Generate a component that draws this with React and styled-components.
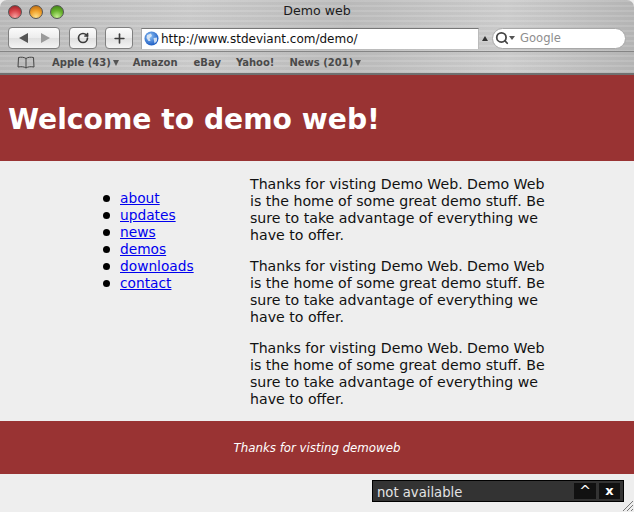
import React from "react";
import styled, { createGlobalStyle } from "styled-components";
import { RotateCw, Plus, Search } from "lucide-react";

const Global = createGlobalStyle`
  html, body { margin: 0; padding: 0; background: #eee; }
  body { font-family: "DejaVu Sans", Verdana, sans-serif; }
`;

const Page = styled.div`
  width: 634px;
  height: 512px;
  position: relative;
  overflow: hidden;
  display: flex;
  flex-direction: column;
  background: #eee;
`;

const metal = `repeating-linear-gradient(180deg, rgba(255,255,255,.07) 0 2px, rgba(0,0,0,.025) 2px 5px)`;

const Chrome = styled.div`
  height: 75px;
  flex: none;
  background: ${metal}, linear-gradient(90deg, #bcbcbc, #cdcdcd 30%, #bdbdbd 55%, #cfcfcf 80%, #b8b8b8);
  border-radius: 7px 7px 0 0;
  display: flex;
  flex-direction: column;
`;

const TitleBar = styled.div`
  height: 24px;
  flex: none;
  display: flex;
  align-items: center;
  padding: 0 8px;
  position: relative;
`;

const Lights = styled.div`
  display: flex;
  gap: 7px;
`;

const Light = styled.span`
  width: 14px;
  height: 14px;
  border-radius: 50%;
  border: 1px solid #555;
  box-sizing: border-box;
  background: radial-gradient(circle at 50% 90%, ${(p) => p.$hi} 0, ${(p) => p.$c} 50%, ${(p) => p.$dark} 100%);
`;

const Title = styled.div`
  position: absolute;
  left: 0;
  right: 0;
  top: 2px;
  text-align: center;
  font: 12.6px/18px "DejaVu Sans", sans-serif;
  color: #1c1c1c;
`;

const ToolRow = styled.div`
  height: 28px;
  flex: none;
  display: flex;
  align-items: center;
  padding: 0 8px;
  box-sizing: border-box;
`;

const Btn = styled.div`
  height: 22px;
  width: ${(p) => p.$w}px;
  margin-right: ${(p) => p.$mr}px;
  box-sizing: border-box;
  border: 1px solid #808080;
  border-radius: 4px;
  background: linear-gradient(180deg, #fbfbfb, #ececec 50%, #e0e0e0 52%, #f4f4f4);
  display: flex;
  align-items: center;
  justify-content: center;
  color: #3c3c3c;
`;

const BackForward = styled(Btn)`
  justify-content: space-around;
  padding: 0 3px;
  background: linear-gradient(90deg, transparent 49%, #c8c8c8 49%, #c8c8c8 51%, transparent 51%),
    linear-gradient(180deg, #fbfbfb, #ececec 50%, #e0e0e0 52%, #f4f4f4);
`;

const Arrow = styled.span`
  width: 0;
  height: 0;
  border-top: 5px solid transparent;
  border-bottom: 5px solid transparent;
  border-right: ${(p) => (p.$right ? "0" : "9px solid #555")};
  border-left: ${(p) => (p.$right ? "9px solid #9a9a9a" : "0")};
`;

const Address = styled.div`
  width: 338px;
  height: 21px;
  box-sizing: border-box;
  background: #fff;
  border-top: 1px solid #777;
  border-left: 1px solid #aaa;
  border-right: 1px solid #bbb;
  display: flex;
  align-items: center;
  padding-left: 2px;
  gap: 2px;
  font: 12px/18px "DejaVu Sans", sans-serif;
  color: #111;
`;

const Stepper = styled.div`
  width: 12px;
  display: flex;
  justify-content: center;
`;

const SearchField = styled.div`
  width: 134px;
  height: 21px;
  margin-left: 1px;
  box-sizing: border-box;
  border-radius: 11px;
  background: #fff;
  border: 1px solid #a8a8a8;
  display: flex;
  align-items: center;
  padding-left: 2px;
  font: 11.6px/16px "DejaVu Sans", sans-serif;
  color: #8e8e8e;
`;

const SearchCaret = styled.span`
  width: 0;
  height: 0;
  margin: 0 5px 0 0;
  border-left: 3px solid transparent;
  border-right: 3px solid transparent;
  border-top: 4px solid #555;
`;

const Bookmarks = styled.div`
  flex: 1;
  display: flex;
  align-items: center;
  border-top: 1px solid #858585;
  border-bottom: 2px solid #707070;
  padding-left: 17px;
  box-sizing: border-box;
  margin-top: -1px;
`;

const Mark = styled.span`
  font: bold 10px/14px "DejaVu Sans", sans-serif;
  color: #4a4a4a;
  margin-right: ${(p) => p.$mr}px;
  display: inline-flex;
  align-items: center;
`;

const MarkCaret = styled.span`
  display: inline-block;
  width: 0;
  height: 0;
  margin-left: 2px;
  border-left: 3.5px solid transparent;
  border-right: 3.5px solid transparent;
  border-top: 6px solid #555;
`;

const Header = styled.header`
  height: 86px;
  flex: none;
  background: #993333;
  display: flex;
  align-items: center;
  padding: 3px 0 0 8px;
  box-sizing: border-box;
`;

const Heading = styled.h1`
  margin: 0;
  font: bold 28.2px/36px "DejaVu Sans", sans-serif;
  color: #fff;
`;

const Content = styled.main`
  height: 260px;
  flex: none;
  display: flex;
  font-size: 14.15px;
  line-height: 17px;
  color: #111;
`;

const Nav = styled.ul`
  width: 250px;
  flex: none;
  box-sizing: border-box;
  margin: 0;
  padding: 29px 0 0 120px;
  list-style: none;
  font-size: 13.75px;
`;

const NavItem = styled.li`
  position: relative;
  &::before {
    content: "";
    position: absolute;
    left: -17px;
    top: 5px;
    width: 7px;
    height: 7px;
    border-radius: 50%;
    background: #000;
  }
`;

const NavLink = styled.a`
  color: #0000ee;
  text-decoration: underline;
`;

const Body = styled.div`
  width: 300px;
  padding-top: 15px;
`;

const Para = styled.p`
  margin: 0 0 14px;
`;

const Footer = styled.footer`
  height: 53px;
  flex: none;
  background: #993333;
  display: flex;
  align-items: center;
  justify-content: center;
  font: italic 11.8px/16px "DejaVu Sans", sans-serif;
  color: #fff;
`;

const StatusArea = styled.div`
  flex: 1;
  display: flex;
  justify-content: flex-end;
  align-items: flex-start;
  padding: 6px 10px 0 0;
`;

const Status = styled.div`
  width: 252px;
  height: 22px;
  box-sizing: border-box;
  background: #333;
  border: 1px solid #000;
  display: flex;
  align-items: center;
  padding: 0 3px 0 4px;
  gap: 3px;
  font: 13.2px/18px "DejaVu Sans", sans-serif;
  color: #e4e4e4;
`;

const StatusText = styled.span`
  flex: 1;
  padding-top: 3px;
`;

const StatusBtn = styled.span`
  width: ${(p) => p.$w}px;
  height: 16px;
  background: #111;
  color: #fff;
  font: ${(p) => (p.$thin ? "normal 14px" : "bold 13px")}/16px "DejaVu Sans", sans-serif;
  text-align: center;
`;

const Grip = styled.svg`
  position: absolute;
  right: 0;
  bottom: 0;
`;

const Globe = () => (
  <svg width="15" height="15" viewBox="0 0 15 15">
    <defs>
      <radialGradient id="g" cx="40%" cy="35%" r="70%">
        <stop offset="0" stopColor="#8fc2f5" />
        <stop offset="1" stopColor="#1556c0" />
      </radialGradient>
    </defs>
    <circle cx="7.5" cy="7.5" r="7" fill="url(#g)" />
    <path d="M3 4 L7 2.5 L8 5 L5.5 7 L6.5 10 L4.5 10 L2.5 7 Z M9.5 7 L13 6.5 L13 10 L10.5 12.5 Z" fill="#e8eef6" opacity="0.85" />
  </svg>
);

const Book = () => (
  <svg width="18" height="13" viewBox="0 0 18 13" fill="none" stroke="#444" strokeWidth="1">
    <path d="M9 2.5 C7 1 4 1 1.5 1.5 L1 11 C4 10.5 7 10.5 9 12 C11 10.5 14 10.5 17 11 L16.5 1.5 C14 1 11 1 9 2.5 Z M9 2.5 V12" />
  </svg>
);

const navItems = ["about", "updates", "news", "demos", "downloads", "contact"];
const copy = "Thanks for visting Demo Web. Demo Web is the home of some great demo stuff. Be sure to take advantage of everything we have to offer.";

export default function App() {
  return (
    <Page>
      <Global />
      <Chrome>
        <TitleBar>
          <Lights>
            <Light $c="#d9444a" $hi="#f7a0a0" $dark="#8e1a1e" />
            <Light $c="#f0a02a" $hi="#fde08a" $dark="#b0600c" />
            <Light $c="#69b32e" $hi="#c4f090" $dark="#3a7a12" />
          </Lights>
          <Title>Demo web</Title>
        </TitleBar>
        <ToolRow>
          <BackForward $w={52} $mr={9}>
            <Arrow />
            <Arrow $right />
          </BackForward>
          <Btn $w={28} $mr={8}>
            <RotateCw size={12} strokeWidth={3.4} />
          </Btn>
          <Btn $w={28} $mr={8}>
            <Plus size={15} strokeWidth={2.6} />
          </Btn>
          <Address>
            <Globe />
            http://www.stdeviant.com/demo/
          </Address>
          <Stepper>
            <svg width="6" height="5" viewBox="0 0 6 5"><path d="M0 5 L3 0 L6 5 Z" fill="#333" /></svg>
          </Stepper>
          <SearchField>
            <Search size={14} strokeWidth={3} color="#444" />
            <SearchCaret />
            Google
          </SearchField>
        </ToolRow>
        <Bookmarks>
          <Mark $mr={17}><Book /></Mark>
          <Mark $mr={14}>Apple (43)<MarkCaret /></Mark>
          <Mark $mr={16}>Amazon</Mark>
          <Mark $mr={15}>eBay</Mark>
          <Mark $mr={15}>Yahoo!</Mark>
          <Mark $mr={0}>News (201)<MarkCaret /></Mark>
        </Bookmarks>
      </Chrome>
      <Header>
        <Heading>Welcome to demo web!</Heading>
      </Header>
      <Content>
        <Nav>
          {navItems.map((item) => (
            <NavItem key={item}><NavLink href="#">{item}</NavLink></NavItem>
          ))}
        </Nav>
        <Body>
          <Para>{copy}</Para>
          <Para>{copy}</Para>
          <Para>{copy}</Para>
        </Body>
      </Content>
      <Footer>Thanks for visting demoweb</Footer>
      <StatusArea>
        <Status>
          <StatusText>not available</StatusText>
          <StatusBtn $w={22} $thin>^</StatusBtn>
          <StatusBtn $w={21}>x</StatusBtn>
        </Status>
      </StatusArea>
      <Grip width="12" height="12" viewBox="0 0 12 12" stroke="#777">
        <path d="M11 1 L1 11 M11 5 L5 11 M11 9 L9 11" />
      </Grip>
    </Page>
  );
}
